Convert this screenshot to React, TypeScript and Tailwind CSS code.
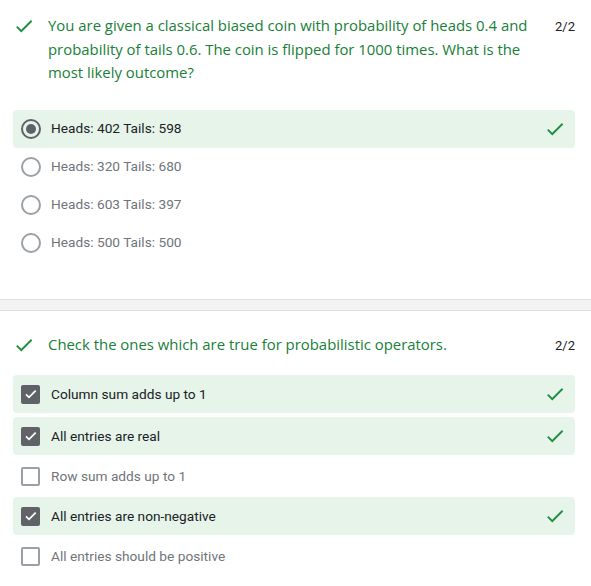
import React from "react";

const DoneIcon = ({ className = "" }: { className?: string }) => (
  <svg viewBox="0 0 24 24" className={className} fill="currentColor">
    <path d="M9 16.17L4.83 12l-1.42 1.41L9 19 21 7l-1.41-1.41z" />
  </svg>
);

const radioOptions = [
  { label: "Heads: 402 Tails: 598", selected: true },
  { label: "Heads: 320 Tails: 680", selected: false },
  { label: "Heads: 603 Tails: 397", selected: false },
  { label: "Heads: 500 Tails: 500", selected: false },
];

const checkOptions = [
  { label: "Column sum adds up to 1", checked: true, gap: "mt-0" },
  { label: "All entries are real", checked: true, gap: "mt-[4px]" },
  { label: "Row sum adds up to 1", checked: false, gap: "mt-[2px]" },
  { label: "All entries are non-negative", checked: true, gap: "mt-[2px]" },
  { label: "All entries should be positive", checked: false, gap: "mt-[2px]" },
];

const QuestionHeader = ({ text }: { text: string }) => (
  <div className="flex items-start">
    <DoneIcon className="w-[22px] h-[22px] mt-[1px] shrink-0 text-[#1e8e3e]" />
    <p className="ml-[13px] flex-1 text-[14.9px] leading-[23.5px] text-[#188038] font-['Open_Sans',sans-serif] pr-[20px]">
      {text}
    </p>
    <span className="mt-[3px] text-[13px] text-[#202124] font-['Roboto',sans-serif]">2/2</span>
  </div>
);

export default function App() {
  return (
    <div className="w-[591px] h-[586px] overflow-hidden bg-white font-['Roboto',sans-serif]">
      {/* question 1 */}
      <div className="pl-[13px] pr-[16px] pt-[14px] pb-[37px] border-b border-[#e0e0e0]">
        <QuestionHeader text="You are given a classical biased coin with probability of heads 0.4 and probability of tails 0.6. The coin is flipped for 1000 times. What is the most likely outcome?" />
        <div className="mt-[25px] flex flex-col">
          {radioOptions.map((o) => (
            <div
              key={o.label}
              className={`h-[38px] flex items-center pl-[8px] pr-[9px] rounded-[4px] ${o.selected ? "bg-[#e6f4ea]" : ""}`}
            >
              <span
                className={`w-[20px] h-[20px] rounded-full border-2 flex items-center justify-center ${o.selected ? "border-[#5f6368]" : "border-[#9aa0a6]"}`}
              >
                {o.selected && <span className="w-[10px] h-[10px] rounded-full bg-[#5f6368]" />}
              </span>
              <span className={`ml-[10px] flex-1 text-[13.7px] ${o.selected ? "text-[#202124]" : "text-[#70757a]"}`}>
                {o.label}
              </span>
              {o.selected && <DoneIcon className="w-[22px] h-[22px] text-[#1e8e3e]" />}
            </div>
          ))}
        </div>
      </div>

      <div className="h-[11px] bg-[#f1f3f4] border-b border-[#e0e0e0]" />

      {/* question 2 */}
      <div className="pl-[13px] pr-[16px] pt-[22px]">
        <QuestionHeader text="Check the ones which are true for probabilistic operators." />
        <div className="mt-[19px] flex flex-col">
          {checkOptions.map((o) => (
            <div
              key={o.label}
              className={`${o.gap} h-[38px] flex items-center pl-[8px] pr-[9px] rounded-[4px] ${o.checked ? "bg-[#e6f4ea]" : ""}`}
            >
              <span
                className={`w-[19px] h-[19px] rounded-[2px] flex items-center justify-center ${o.checked ? "bg-[#5f6368]" : "border-2 border-[#9aa0a6]"}`}
              >
                {o.checked && (
                  <svg viewBox="0 0 24 24" className="w-[16px] h-[16px]" fill="none" stroke="white" strokeWidth="2.6">
                    <path d="M4.5 12.5l4.5 4.5 10-10" />
                  </svg>
                )}
              </span>
              <span className={`ml-[11px] flex-1 text-[13.7px] ${o.checked ? "text-[#202124]" : "text-[#70757a]"}`}>
                {o.label}
              </span>
              {o.checked && <DoneIcon className="w-[22px] h-[22px] text-[#1e8e3e]" />}
            </div>
          ))}
        </div>
      </div>
    </div>
  );
}
